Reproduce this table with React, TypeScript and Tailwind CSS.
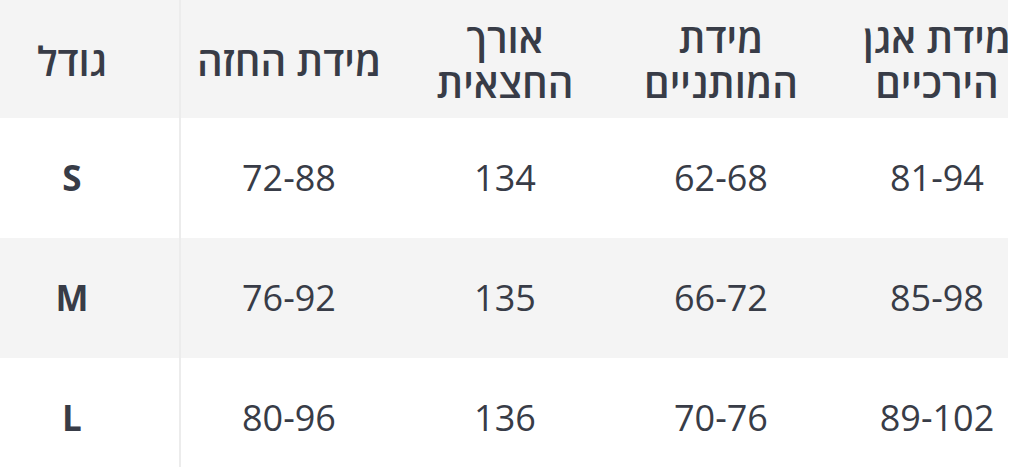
const font = { fontFamily: '"Open Sans", "Noto Sans", "DejaVu Sans", sans-serif' };

const headers: string[][] = [
  ['גודל'],
  ['מידת החזה'],
  ['אורך', 'החצאית'],
  ['מידת', 'המותניים'],
  ['מידת אגן', 'הירכיים'],
];

const rows = [
  { size: 'S', values: ['72-88', '134', '62-68', '81-94'] },
  { size: 'M', values: ['76-92', '135', '66-72', '85-98'] },
  { size: 'L', values: ['80-96', '136', '70-76', '89-102'] },
];

const cols = 'grid grid-cols-[216px_216px_216px_216px_216px]';

export default function App() {
  return (
    <div className="w-[1013px] h-[467px] overflow-hidden bg-white" style={font}>
      <div className="w-[1008px] overflow-hidden">
        <div className="ml-[-35px] w-[1082px] text-[#383c47]">
          <div className={`${cols} h-[118px] bg-[#f4f4f4]`}>
            {headers.map((lines, i) => (
              <div
                key={i}
                dir="rtl"
                className={`flex flex-col items-center justify-center pt-[2px] text-center text-[40px] font-semibold leading-[45px] ${
                  i === 0 ? 'border-r-2 border-[#ececec]' : ''
                }`}
              >
                {lines.map((l) => (
                  <span key={l}>{l}</span>
                ))}
              </div>
            ))}
          </div>
          {rows.map((row, r) => (
            <div key={row.size} className={`${cols} h-[120px] ${r % 2 === 1 ? 'bg-[#f4f4f4]' : 'bg-white'}`}>
              <div className="flex items-center justify-center border-r-2 border-[#ececec] text-[35px] font-bold">
                {row.size}
              </div>
              {row.values.map((v, i) => (
                <div key={i} className="flex items-center justify-center text-[36px] font-normal">
                  {v}
                </div>
              ))}
            </div>
          ))}
        </div>
      </div>
    </div>
  );
}
